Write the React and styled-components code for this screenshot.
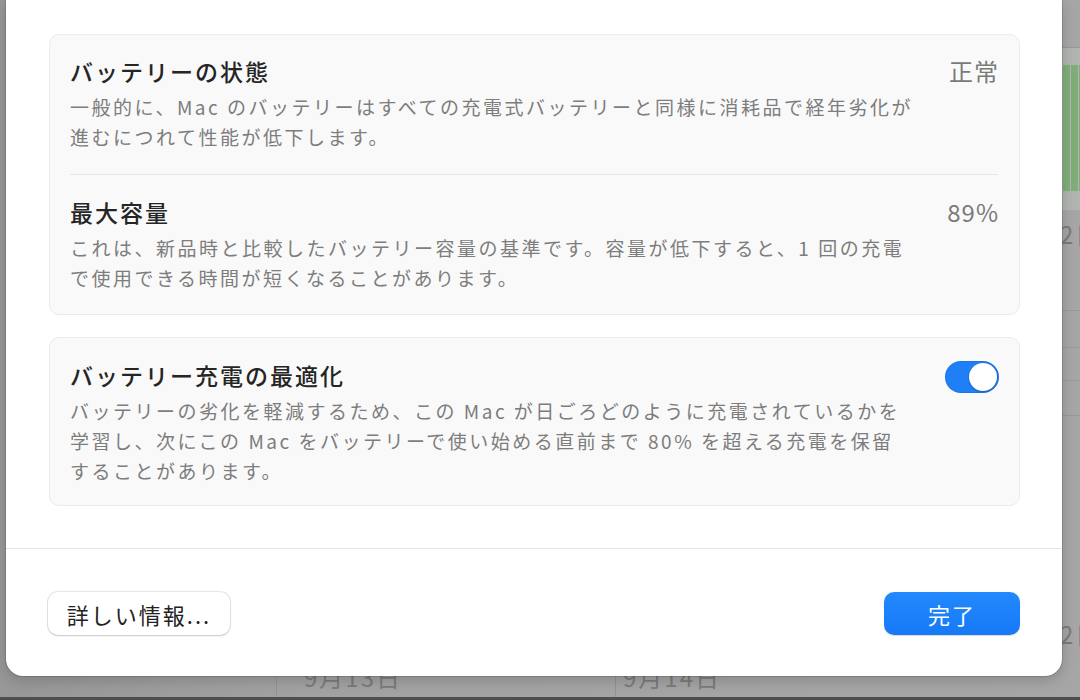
import styled, { createGlobalStyle } from "styled-components";

const GlobalStyle = createGlobalStyle`
  html, body {
    margin: 0;
    padding: 0;
    background: #a3a3a3;
  }
  body {
    font-family: "Noto Sans CJK JP", "Noto Sans", "Liberation Sans", sans-serif;
    -webkit-font-smoothing: antialiased;
  }
`;

const Screen = styled.div`
  position: relative;
  width: 1080px;
  height: 700px;
  overflow: hidden;
  background: linear-gradient(90deg, #979797 0%, #a2a2a2 30%, #a6a6a6 100%);
  border-bottom: 3px solid #4e4e4e;
  box-sizing: border-box;
`;

/* window behind the sheet: only bits of it peek out */
const Behind = styled.div`
  position: absolute;
  inset: 0;
  z-index: 0;
`;

const ChartStrip = styled.div`
  position: absolute;
  top: 47px;
  left: 1062px;
  width: 18px;
  height: 163px;
  background: #b1b4b0;
`;

const Bars = styled.svg`
  position: absolute;
  top: 65px;
  left: 1062px;
`;

const GridLine = styled.div`
  position: absolute;
  left: ${(p) => p.$left}px;
  top: ${(p) => p.$top}px;
  width: ${(p) => p.$w}px;
  height: 1px;
  background: #989898;
`;

const VLine = styled.div`
  position: absolute;
  left: ${(p) => p.$left}px;
  top: 660px;
  width: 1px;
  height: 40px;
  background: #939393;
`;

const FaintText = styled.span`
  position: absolute;
  left: ${(p) => p.$left}px;
  top: ${(p) => p.$top}px;
  font-size: 24px;
  letter-spacing: 2px;
  color: #7b7b7b;
  white-space: nowrap;
`;

const Sheet = styled.div`
  position: relative;
  z-index: 1;
  margin-left: 6px;
  width: 1056px;
  height: 676px;
  background: #ffffff;
  border-radius: 0 0 17px 17px;
  box-shadow: 0 0 0 1px rgba(0, 0, 0, 0.12), 0 4px 14px rgba(0, 0, 0, 0.18);
  display: flex;
  flex-direction: column;
`;

const Content = styled.div`
  display: flex;
  flex-direction: column;
  gap: 22px;
  padding: 34px 42px 0 43px;
  height: 548px;
  box-sizing: border-box;
`;

const Card = styled.div`
  background: #f9f9f9;
  border: 1px solid #ebebeb;
  border-radius: 10px;
  padding: 0 21px 0 20px;
`;

const Row = styled.div`
  display: flex;
  align-items: flex-start;
  justify-content: space-between;
  padding: ${(p) => p.$pad};
  border-top: ${(p) => (p.$divided ? "1px solid #e6e6e6" : "none")};
`;

const TextCol = styled.div`
  display: flex;
  flex-direction: column;
`;

const Title = styled.div`
  font-size: 23px;
  line-height: 32px;
  font-weight: 500;
  letter-spacing: 2px;
  color: #252525;
`;

const Desc = styled.div`
  margin-top: 5px;
  font-size: 19px;
  line-height: 30px;
  letter-spacing: 2.5px;
  color: #7d7d7d;
  white-space: nowrap;
`;

const Value = styled.div`
  font-size: 24px;
  line-height: 32px;
  letter-spacing: 1px;
  margin-right: -1px;
  color: #7a7a7a;
`;

const Switch = styled.div`
  position: relative;
  margin-top: 2px;
  margin-right: -1px;
  width: 54px;
  height: 32px;
  border-radius: 16px;
  background: ${(p) => (p.$on ? "#1f7ff6" : "#dcdcdc")};
  box-shadow: inset 0 0 0 1px rgba(0, 0, 0, 0.08);
  flex-shrink: 0;
`;

const Knob = styled.div`
  position: absolute;
  top: 2px;
  left: ${(p) => (p.$on ? "24px" : "2px")};
  width: 28px;
  height: 28px;
  border-radius: 50%;
  background: #ffffff;
  box-shadow: 0 0 0 0.5px rgba(0, 0, 0, 0.15), 0 1px 2px rgba(0, 0, 0, 0.2);
`;

const Divider = styled.div`
  height: 1px;
  background: #e4e4e4;
`;

const Footer = styled.div`
  display: flex;
  justify-content: space-between;
  align-items: center;
  padding: 43px 42px 0 42px;
`;

const Button = styled.button`
  height: 43px;
  border: none;
  border-radius: 10px;
  padding: 0;
  width: ${(p) => p.$w}px;
  font-family: inherit;
  font-size: 22px;
  letter-spacing: 2px;
  color: ${(p) => (p.$primary ? "#ffffff" : "#222222")};
  background: ${(p) =>
    p.$primary ? "linear-gradient(180deg, #2389fd 0%, #1679f7 100%)" : "#ffffff"};
  box-shadow: ${(p) =>
    p.$primary
      ? "0 0.5px 1px rgba(0, 0, 0, 0.15)"
      : "0 0 0 1px rgba(0, 0, 0, 0.09), 0 1px 2px rgba(0, 0, 0, 0.14)"};
  cursor: pointer;
`;

const barsX = [1, 9, 17];

const App = () => {
  return (
    <>
      <GlobalStyle />
      <Screen>
        <Behind>
          <ChartStrip />
          <Bars width="18" height="126" viewBox="0 0 18 126">
            {barsX.map((x) => (
              <rect key={x} x={x} y="0" width="7" height="126" fill="#7fae78" />
            ))}
          </Bars>
          <FaintText $left={1060} $top={216}>2日</FaintText>
          <FaintText $left={1060} $top={616}>2日</FaintText>
          <GridLine $left={1062} $top={310} $w={18} />
          <GridLine $left={1062} $top={347} $w={18} />
          <GridLine $left={1062} $top={380} $w={18} />
          <GridLine $left={1062} $top={415} $w={18} />
          <GridLine $left={1062} $top={47} $w={18} />
          <VLine $left={276} />
          <VLine $left={615} />
          <FaintText $left={304} $top={659}>9月13日</FaintText>
          <FaintText $left={623} $top={659}>9月14日</FaintText>
        </Behind>

        <Sheet>
          <Content>
            <Card>
              <Row $pad="20px 0 22px 0">
                <TextCol>
                  <Title>バッテリーの状態</Title>
                  <Desc>
                    一般的に、Mac のバッテリーはすべての充電式バッテリーと同様に消耗品で経年劣化が
                    <br />
                    進むにつれて性能が低下します。
                  </Desc>
                </TextCol>
                <Value>正常</Value>
              </Row>
              <Row $divided $pad="21px 0 21px 0">
                <TextCol>
                  <Title>最大容量</Title>
                  <Desc>
                    これは、新品時と比較したバッテリー容量の基準です。容量が低下すると、1 回の充電
                    <br />
                    で使用できる時間が短くなることがあります。
                  </Desc>
                </TextCol>
                <Value>89%</Value>
              </Row>
            </Card>

            <Card>
              <Row $pad="21px 0 19px 0">
                <TextCol>
                  <Title>バッテリー充電の最適化</Title>
                  <Desc>
                    バッテリーの劣化を軽減するため、この Mac が日ごろどのように充電されているかを
                    <br />
                    学習し、次にこの Mac をバッテリーで使い始める直前まで 80% を超える充電を保留
                    <br />
                    することがあります。
                  </Desc>
                </TextCol>
                <Switch $on>
                  <Knob $on />
                </Switch>
              </Row>
            </Card>
          </Content>

          <Divider />

          <Footer>
            <Button $w={182}>詳しい情報...</Button>
            <Button $primary $w={136}>完了</Button>
          </Footer>
        </Sheet>
      </Screen>
    </>
  );
};

export default App;
